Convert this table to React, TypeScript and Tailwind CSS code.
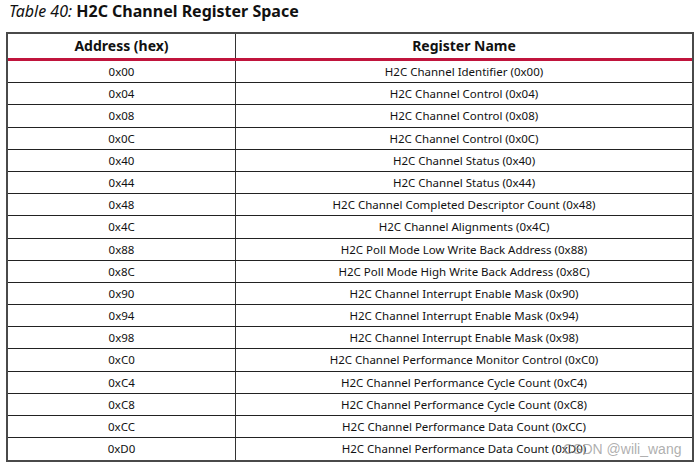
const rows: [string, string][] = [
	["0x00", "H2C Channel Identifier (0x00)"],
	["0x04", "H2C Channel Control (0x04)"],
	["0x08", "H2C Channel Control (0x08)"],
	["0x0C", "H2C Channel Control (0x0C)"],
	["0x40", "H2C Channel Status (0x40)"],
	["0x44", "H2C Channel Status (0x44)"],
	["0x48", "H2C Channel Completed Descriptor Count (0x48)"],
	["0x4C", "H2C Channel Alignments (0x4C)"],
	["0x88", "H2C Poll Mode Low Write Back Address (0x88)"],
	["0x8C", "H2C Poll Mode High Write Back Address (0x8C)"],
	["0x90", "H2C Channel Interrupt Enable Mask (0x90)"],
	["0x94", "H2C Channel Interrupt Enable Mask (0x94)"],
	["0x98", "H2C Channel Interrupt Enable Mask (0x98)"],
	["0xC0", "H2C Channel Performance Monitor Control (0xC0)"],
	["0xC4", "H2C Channel Performance Cycle Count (0xC4)"],
	["0xC8", "H2C Channel Performance Cycle Count (0xC8)"],
	["0xCC", "H2C Channel Performance Data Count (0xCC)"],
	["0xD0", "H2C Channel Performance Data Count (0xD0)"],
];

export default function App() {
	return (
		<div className="relative h-[464px] w-[698px] bg-white font-['Noto_Sans',sans-serif] text-[#111]">
			<div className="h-[32px] pl-[9px] text-[16px] leading-[22px]">
				<span className="italic">Table 40:</span> <span className="font-bold">H2C Channel Register Space</span>
			</div>
			<div className="ml-[6px] w-[688px] border-2 border-[#4a4a4a]">
				<div className="flex h-[24px] text-[14px] font-bold leading-[24px]">
					<div className="w-[228px] border-r border-[#333] text-center">Address (hex)</div>
					<div className="flex-1 text-center">Register Name</div>
				</div>
				<div className="h-[3px] bg-[#c0143c]" />
				{rows.map(([addr, name], i) => (
					<div
						key={addr}
						className={`flex h-[22.2px] text-[11.5px] leading-[21px] ${
							i < rows.length - 1 ? "border-b border-[#222]" : ""
						}`}
					>
						<div className="w-[228px] border-r border-[#333] text-center">{addr}</div>
						<div className="flex-1 text-center">{name}</div>
					</div>
				))}
			</div>
			<div className="absolute left-[563px] top-[440px] font-['Liberation_Sans',sans-serif] text-[14px] leading-[18px] text-[#9a9a9a]/80">
				CSDN @wili_wang
			</div>
		</div>
	);
}
